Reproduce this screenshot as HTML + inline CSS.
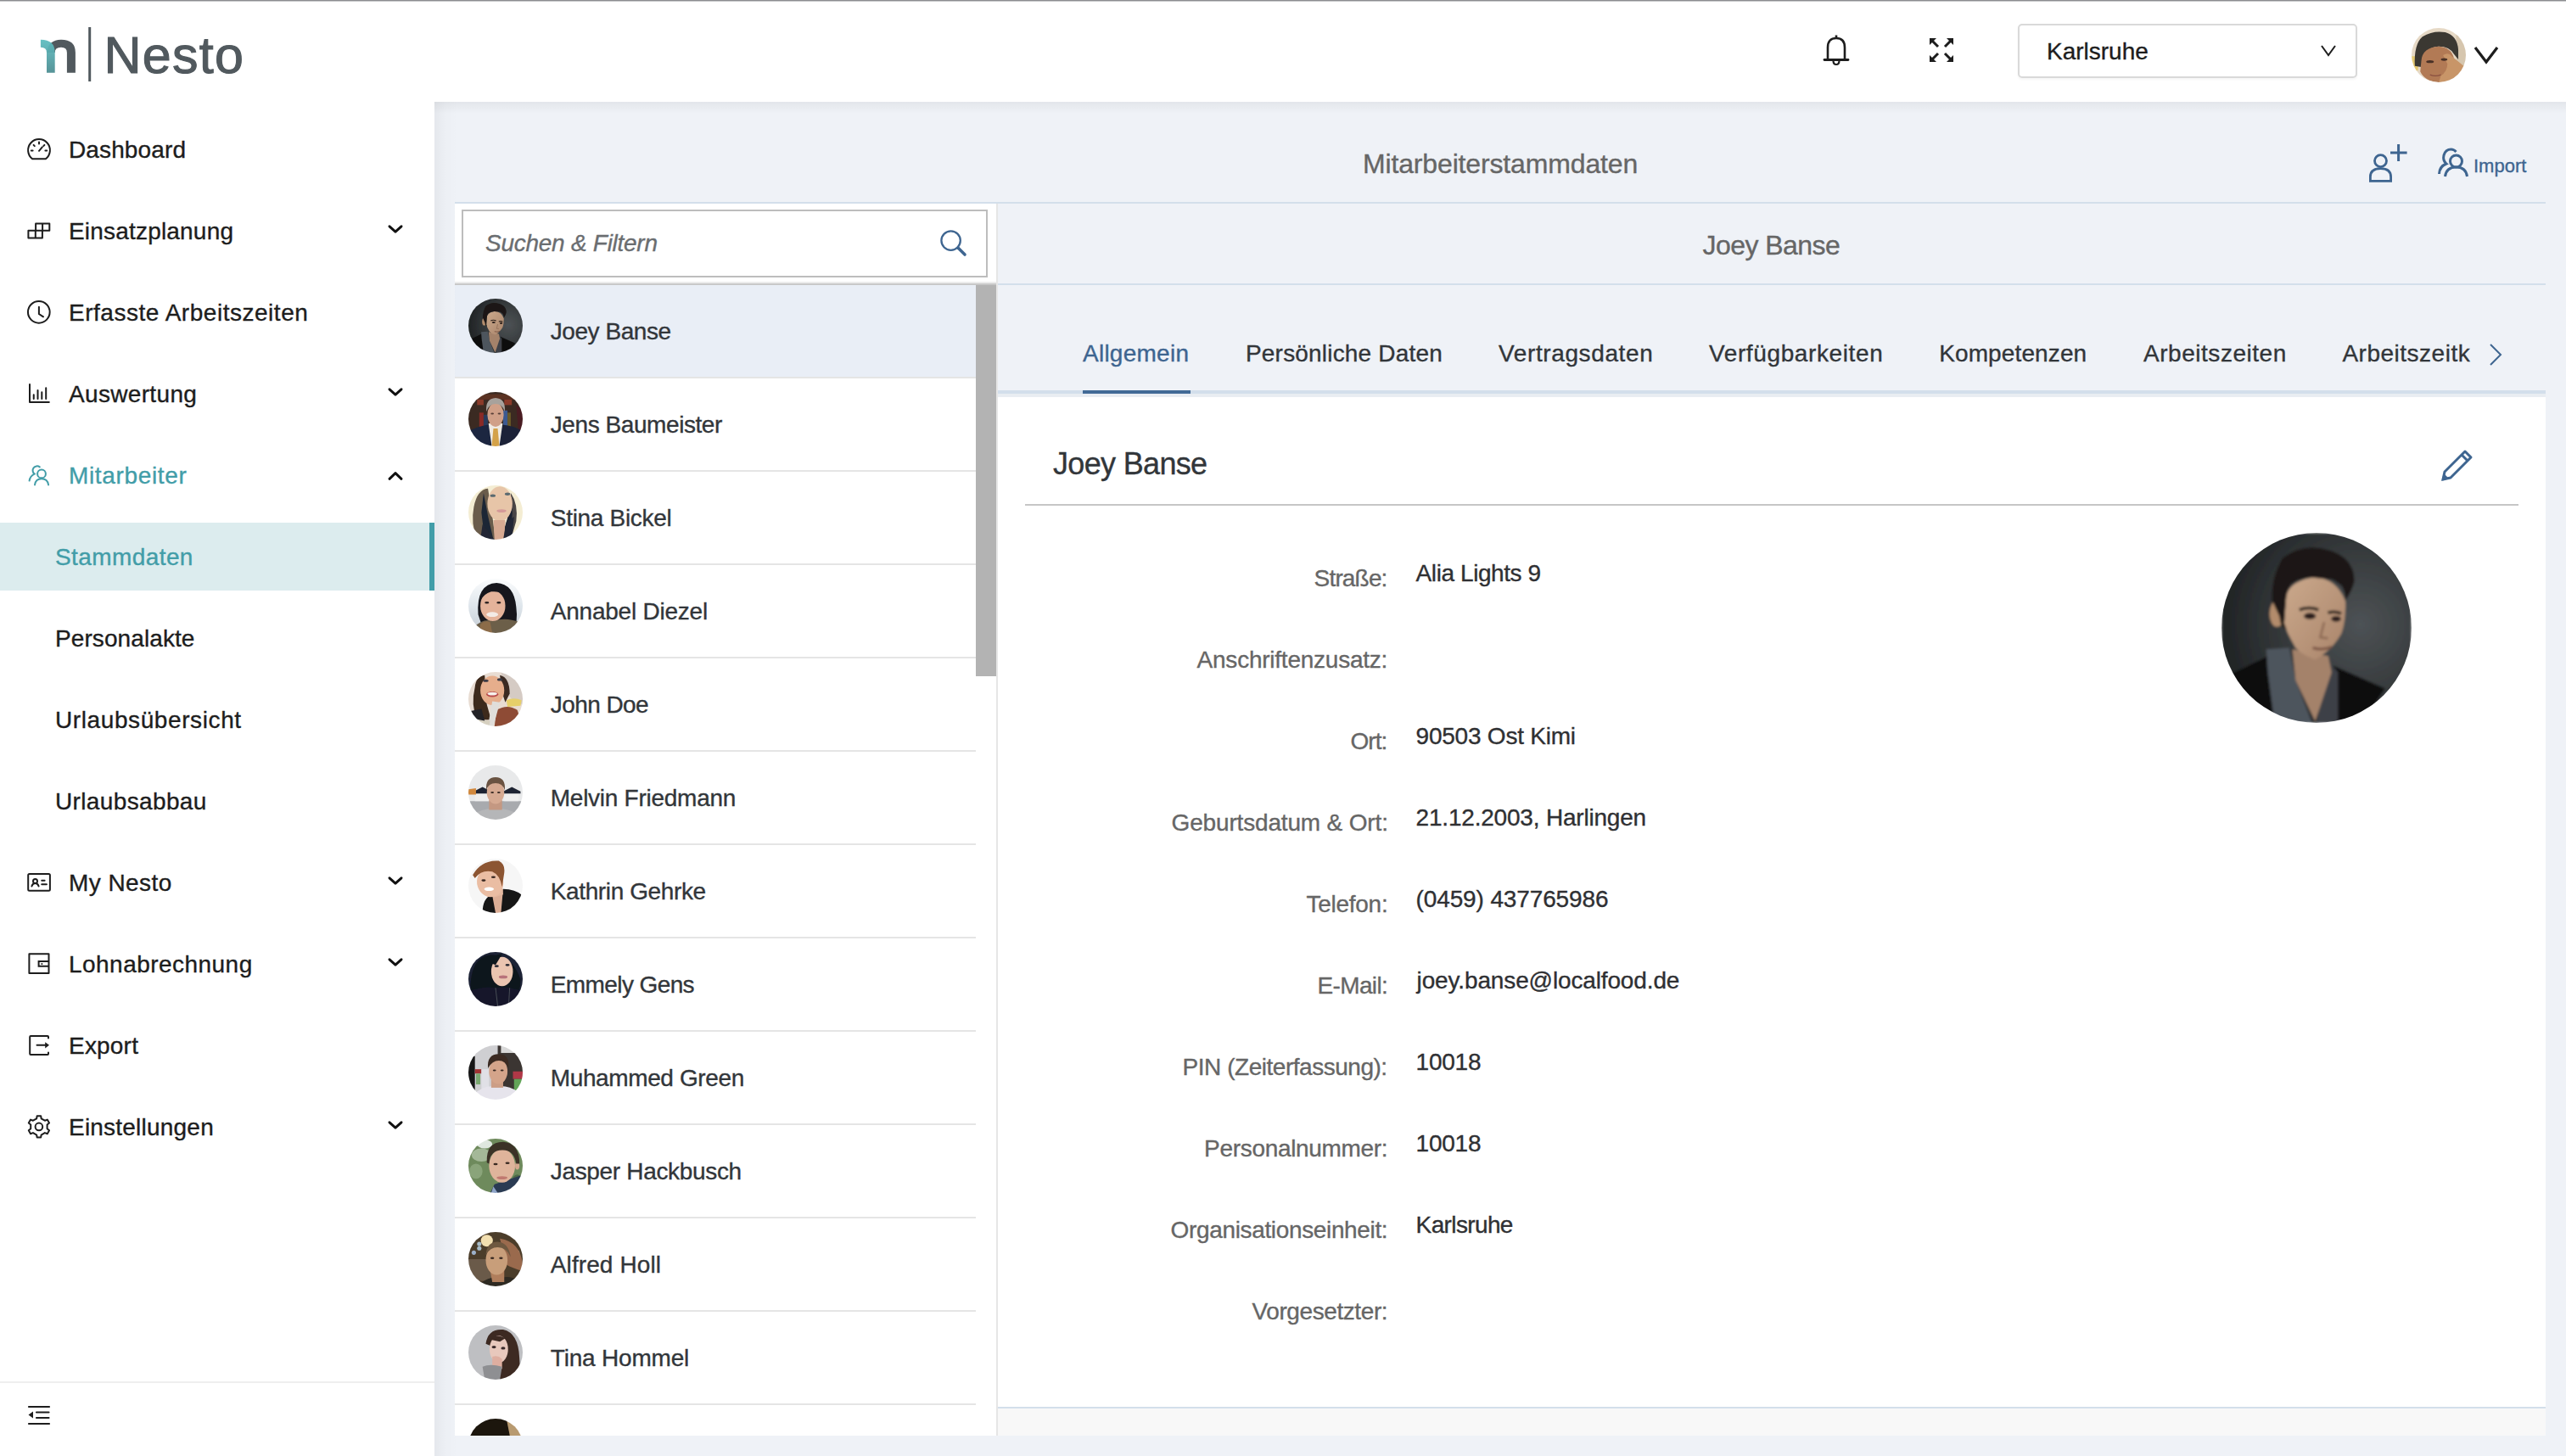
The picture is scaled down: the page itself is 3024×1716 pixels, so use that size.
<!DOCTYPE html><html><head><meta charset="utf-8"><style>
html,body{margin:0;padding:0;width:3024px;height:1716px;overflow:hidden;background:#eff2f7;}
body{position:relative;font-family:"Liberation Sans",sans-serif;}
.t{position:absolute;white-space:nowrap;line-height:1;-webkit-text-stroke-width:0.35px;}
.r{position:absolute;}
.s{position:absolute;overflow:visible;}
</style></head><body>
<div class="r" style="left:512px;top:120px;width:2512px;height:1596px;background:#eff2f7;"></div>
<div class="r" style="left:512px;top:0px;width:2512px;height:120px;background:#ffffff;"></div>
<div class="r" style="left:512px;top:120px;width:2512px;height:14px;background:transparent;background:linear-gradient(to bottom,rgba(0,0,0,0.05),rgba(0,0,0,0));"></div>
<div class="r" style="left:0px;top:0px;width:512px;height:1716px;background:#ffffff;z-index:2;"></div>
<div class="r" style="left:512px;top:120px;width:28px;height:1596px;background:transparent;background:linear-gradient(to right,rgba(0,0,0,0.045),rgba(0,0,0,0.012) 45%,rgba(0,0,0,0));z-index:1;"></div>
<div style="position:absolute;left:0;top:0;width:512px;height:1716px;z-index:3;">
<svg class="s" style="left:0px;top:0px;" width="300" height="110" viewBox="0 0 300 110"><defs><linearGradient id="lg" x1="0" y1="0" x2="0" y2="1"><stop offset="0" stop-color="#5ebdc0"/><stop offset="0.45" stop-color="#58a9ad"/><stop offset="1" stop-color="#4d8d92"/></linearGradient></defs><path d="M55 62 Q57 46.8 72 46.8 Q88.9 46.8 88.9 62 L88.9 85.8 L78.9 85.8 L78.9 62 Q78.9 55.8 72 55.8 Q64.7 55.8 64.7 62 Z" fill="#51595e"/><path d="M47.9 46.8 Q64.7 46.8 64.7 62 L64.7 85.8 L55 85.8 L55 62 Q55 55.8 47.9 55.8 Z" fill="url(#lg)" fill-opacity="0.95"/><rect x="104.2" y="32" width="3" height="64" fill="#51595e"/></svg>
<div class="t" style="left:122.40px;top:34.75px;font-size:61px;color:#51595e;letter-spacing:1.325px;-webkit-text-stroke:1.1px #51595e;">Nesto</div>
<div class="r" style="left:0px;top:616px;width:512px;height:80px;background:#dcecee;"></div>
<div class="r" style="left:506px;top:616px;width:6px;height:80px;background:#429da8;"></div>
<div class="t" style="left:81.00px;top:162.89px;font-size:28px;color:#1d1d1d;letter-spacing:0.125px;">Dashboard</div>
<svg class="s" style="left:30px;top:160px;" width="32" height="32" viewBox="0 0 32 32"><path d="M8.1 27.2 A12.9 12.9 0 1 1 23.9 27.2 Z" fill="none" stroke="#1d1d1d" stroke-width="2" stroke-linejoin="round"/><path d="M16 17.8 L19.8 13.4" fill="none" stroke="#1d1d1d" stroke-width="2" stroke-width="2.4" stroke-linecap="round"/><path d="M16 7.4 V9.6 M9.6 10.9 L10.8 12.1 M22.4 10.9 L21.2 12.1 M6.8 17.5 H8.6 M23.4 17.5 H25.2" fill="none" stroke="#1d1d1d" stroke-width="2" stroke-width="1.8" stroke-linecap="round"/></svg>
<div class="t" style="left:81.00px;top:258.89px;font-size:28px;color:#1d1d1d;letter-spacing:0.192px;">Einsatzplanung</div>
<svg class="s" style="left:30px;top:256px;" width="32" height="32" viewBox="0 0 32 32"><path d="M3.4 15.7 H19.9 V24.4 H3.4 Z M11.8 15.7 V24.4 M12.1 15.7 V7.4 H28.3 V15.7 H19.9 M20.1 7.4 V15.7" fill="none" stroke="#1d1d1d" stroke-width="2" stroke-linejoin="round"/></svg>
<svg class="s" style="left:455px;top:264px;" width="22" height="16" viewBox="0 0 22 16"><path d="M4 2.8 L11 9.1 L18 2.8" fill="none" stroke="#111" stroke-width="3" stroke-linecap="round" stroke-linejoin="round"/></svg>
<div class="t" style="left:81.00px;top:354.89px;font-size:28px;color:#1d1d1d;letter-spacing:0.524px;">Erfasste Arbeitszeiten</div>
<svg class="s" style="left:30px;top:352px;" width="32" height="32" viewBox="0 0 32 32"><circle cx="15.8" cy="15.8" r="12.85" fill="none" stroke="#1d1d1d" stroke-width="2"/><path d="M15.9 9.8 V18 L21 21.3" fill="none" stroke="#1d1d1d" stroke-width="2" stroke-linecap="round"/></svg>
<div class="t" style="left:81.00px;top:450.89px;font-size:28px;color:#1d1d1d;letter-spacing:0.333px;">Auswertung</div>
<svg class="s" style="left:30px;top:448px;" width="32" height="32" viewBox="0 0 32 32"><path d="M5 5 V26 H27.8" fill="none" stroke="#1d1d1d" stroke-width="2" stroke-linecap="round" stroke-linejoin="round"/><path d="M9.75 17.2 V21.9 M14.5 12 V21.9 M19.3 14.2 V21.9 M24.2 9.2 V21.9" fill="none" stroke="#1d1d1d" stroke-width="2" stroke-width="2.1" stroke-linecap="round"/></svg>
<svg class="s" style="left:455px;top:456px;" width="22" height="16" viewBox="0 0 22 16"><path d="M4 2.8 L11 9.1 L18 2.8" fill="none" stroke="#111" stroke-width="3" stroke-linecap="round" stroke-linejoin="round"/></svg>
<div class="t" style="left:81.00px;top:546.89px;font-size:28px;color:#429da8;letter-spacing:0.660px;">Mitarbeiter</div>
<svg class="s" style="left:30px;top:544px;" width="32" height="32" viewBox="0 0 32 32"><path d="M16.8 6.4 A5 5 0 1 0 10.6 14.6 Q5.5 16.8 4.6 22.6" fill="none" stroke="#429da8" stroke-width="2" stroke-linecap="round"/><circle cx="19" cy="14.4" r="4.9" fill="none" stroke="#429da8" stroke-width="2"/><path d="M11 27.4 Q12 20.2 19 20.2 Q26 20.2 27.1 27.4" fill="none" stroke="#429da8" stroke-width="2" stroke-linecap="round"/></svg>
<svg class="s" style="left:455px;top:552px;" width="22" height="16" viewBox="0 0 22 16"><path d="M4 12.3 L11 5.7 L18 12.3" fill="none" stroke="#111" stroke-width="3" stroke-linecap="round" stroke-linejoin="round"/></svg>
<div class="t" style="left:65.00px;top:642.89px;font-size:28px;color:#429da8;letter-spacing:0.411px;">Stammdaten</div>
<div class="t" style="left:65.00px;top:738.89px;font-size:28px;color:#1d1d1d;letter-spacing:0.091px;">Personalakte</div>
<div class="t" style="left:65.00px;top:834.89px;font-size:28px;color:#1d1d1d;letter-spacing:0.600px;">Urlaubsübersicht</div>
<div class="t" style="left:65.00px;top:930.89px;font-size:28px;color:#1d1d1d;letter-spacing:0.364px;">Urlaubsabbau</div>
<div class="t" style="left:81.00px;top:1026.89px;font-size:28px;color:#1d1d1d;letter-spacing:0.429px;">My Nesto</div>
<svg class="s" style="left:30px;top:1024px;" width="32" height="32" viewBox="0 0 32 32"><rect x="3.2" y="6" width="25.7" height="19.7" rx="1.5" fill="none" stroke="#1d1d1d" stroke-width="2"/><circle cx="11.5" cy="14.4" r="2.5" fill="none" stroke="#1d1d1d" stroke-width="2" stroke-width="1.7"/><path d="M7.4 20.5 Q8.5 17.1 11.5 17.1 Q14.5 17.1 15.6 20.5 M19.2 13.7 H22.6 M19.2 18.3 H24.9" fill="none" stroke="#1d1d1d" stroke-width="2" stroke-width="1.8" stroke-linecap="round"/></svg>
<svg class="s" style="left:455px;top:1032px;" width="22" height="16" viewBox="0 0 22 16"><path d="M4 2.8 L11 9.1 L18 2.8" fill="none" stroke="#111" stroke-width="3" stroke-linecap="round" stroke-linejoin="round"/></svg>
<div class="t" style="left:81.00px;top:1122.89px;font-size:28px;color:#1d1d1d;letter-spacing:0.462px;">Lohnabrechnung</div>
<svg class="s" style="left:30px;top:1120px;" width="32" height="32" viewBox="0 0 32 32"><path d="M4.4 4.2 H27.5 V27.1 H4.4 Z" fill="none" stroke="#1d1d1d" stroke-width="2" stroke-linejoin="round"/><path d="M27.5 13 H15.6 V18.7 H27.5" fill="none" stroke="#1d1d1d" stroke-width="2" stroke-width="1.8"/><circle cx="19.4" cy="16" r="1" fill="#1d1d1d"/></svg>
<svg class="s" style="left:455px;top:1128px;" width="22" height="16" viewBox="0 0 22 16"><path d="M4 2.8 L11 9.1 L18 2.8" fill="none" stroke="#111" stroke-width="3" stroke-linecap="round" stroke-linejoin="round"/></svg>
<div class="t" style="left:81.00px;top:1218.89px;font-size:28px;color:#1d1d1d;letter-spacing:0.200px;">Export</div>
<svg class="s" style="left:30px;top:1216px;" width="32" height="32" viewBox="0 0 32 32"><path d="M27 7.5 V6 Q27 5 26 5 H6.2 Q5.2 5 5.2 6 V26 Q5.2 27 6.2 27 H26 Q27 27 27 26 V24.5" fill="none" stroke="#1d1d1d" stroke-width="2" stroke-linecap="round"/><path d="M13.5 15.7 H24" fill="none" stroke="#1d1d1d" stroke-width="2" stroke-linecap="round"/><path d="M23.2 12.2 L28 15.7 L23.2 19.6 Z" fill="#1d1d1d"/></svg>
<div class="t" style="left:81.00px;top:1314.89px;font-size:28px;color:#1d1d1d;letter-spacing:0.217px;">Einstellungen</div>
<svg class="s" style="left:30px;top:1312px;" width="32" height="32" viewBox="0 0 32 32"><path d="M13.14 6.29 L13.66 3.20 L18.14 3.20 L18.66 6.29 L22.85 8.71 L25.78 7.61 L28.02 11.49 L25.60 13.48 L25.60 18.32 L28.02 20.31 L25.78 24.19 L22.85 23.09 L18.66 25.51 L18.14 28.60 L13.66 28.60 L13.14 25.51 L8.95 23.09 L6.02 24.19 L3.78 20.31 L6.20 18.32 L6.20 13.48 L3.78 11.49 L6.02 7.61 L8.95 8.71 Z" fill="none" stroke="#1d1d1d" stroke-width="2" stroke-linejoin="round"/><circle cx="15.9" cy="15.9" r="4.3" fill="none" stroke="#1d1d1d" stroke-width="2"/></svg>
<svg class="s" style="left:455px;top:1320px;" width="22" height="16" viewBox="0 0 22 16"><path d="M4 2.8 L11 9.1 L18 2.8" fill="none" stroke="#111" stroke-width="3" stroke-linecap="round" stroke-linejoin="round"/></svg>
<div class="r" style="left:0px;top:1628px;width:512px;height:2px;background:#efefef;"></div>
<svg class="s" style="left:33px;top:1655px;" width="28" height="26" viewBox="0 0 28 26"><path d="M1 3 H25 M10 9.5 H24.5 M10 16 H24.5 M1 23 H25" stroke="#1d1d1d" stroke-width="2.2" stroke-linecap="round"/><path d="M0.5 12.5 L6 8.5 L6 16.5 Z" fill="#1d1d1d"/></svg>
</div>
<div class="r" style="left:0px;top:0px;width:3024px;height:1px;background:#8c8d90;z-index:10;"></div>
<div class="r" style="left:0px;top:1px;width:3024px;height:1px;background:#c8c9cb;z-index:10;"></div>
<svg class="s" style="left:2148px;top:40px;" width="32" height="40" viewBox="0 0 32 40"><path d="M6 30 V16 Q6 5 16 5 Q26 5 26 16 V30" fill="none" stroke="#1d1d1d" stroke-width="2.6"/><path d="M2 30.5 H30" stroke="#1d1d1d" stroke-width="2.8" stroke-linecap="round"/><path d="M16 1.5 V5" stroke="#1d1d1d" stroke-width="2.6"/><path d="M12.5 31.5 Q12.5 36 16 36 Q19.5 36 19.5 31.5" fill="none" stroke="#1d1d1d" stroke-width="2.2"/></svg>
<svg class="s" style="left:2272px;top:43px;" width="32" height="32" viewBox="0 0 32 32"><g stroke="#1d1d1d" stroke-width="3"><path d="M3 3 L12 12 M29 3 L20 12 M3 29 L12 20 M29 29 L20 20"/></g><g fill="#1d1d1d"><path d="M2 2 H10 L2 10 Z M30 2 H22 L30 10 Z M2 30 H10 L2 22 Z M30 30 H22 L30 22 Z"/></g></svg>
<div class="r" style="left:2378px;top:28px;width:400px;height:64px;background:#ffffff;box-sizing:border-box;border:2px solid #d9d9d9;border-radius:5px;box-shadow:0 2px 3px rgba(0,0,0,0.04);"></div>
<div class="t" style="left:2412.00px;top:46.89px;font-size:28px;color:#1d1d1d;">Karlsruhe</div>
<svg class="s" style="left:2733px;top:51px;" width="22" height="17" viewBox="0 0 22 17"><path d="M3 3 L11 14 L19 3" fill="none" stroke="#1d1d1d" stroke-width="2"/></svg>
<svg class="s" style="left:2842.0px;top:33.0px;" width="64" height="64" viewBox="0 0 100 100"><defs><clipPath id="chdr"><circle cx="50" cy="50" r="50"/></clipPath><filter id="fhdr" x="-5%" y="-5%" width="110%" height="110%"><feGaussianBlur stdDeviation="1.0"/></filter></defs><g clip-path="url(#chdr)"><g filter="url(#fhdr)"><rect width="100" height="100" fill="#e6d9c6"/>
<rect x="82" y="0" width="18" height="100" fill="#d6c6ae"/>
<rect x="0" y="52" width="12" height="26" fill="#e4c870"/>
<path d="M6 70 Q4 30 20 16 Q40 4 62 8 Q84 14 86 40 L86 58 L78 48 Q70 34 50 34 Q24 34 18 72 Z" fill="#3b3733"/>
<path d="M18 60 Q20 36 50 34 Q74 36 78 56 L80 76 Q74 96 50 100 Q24 98 16 80 Z" fill="#b27a55"/>
<path d="M58 50 Q68 44 74 52 L96 70 L90 96 L50 100 L54 88 Q66 80 66 66 Z" fill="#c89568"/>
<ellipse cx="34" cy="62" rx="7" ry="2.6" fill="#4a3028"/><ellipse cx="60" cy="58" rx="6" ry="2.6" fill="#4a3028"/>
<path d="M34 86 Q44 90 54 86" stroke="#8a5040" stroke-width="2" fill="none"/></g></g></svg>
<svg class="s" style="left:2914px;top:52px;" width="34" height="25" viewBox="0 0 34 25"><path d="M3 4 L16 21 L29 4" fill="none" stroke="#1d1d1d" stroke-width="3.2"/></svg>
<div class="t" style="left:1606.00px;top:176.51px;font-size:32px;color:#666666;letter-spacing:-0.150px;">Mitarbeiterstammdaten</div>
<svg class="s" style="left:2790px;top:168px;" width="50" height="50" viewBox="0 0 50 50"><circle cx="15.5" cy="21.6" r="7" fill="none" stroke="#3e6590" stroke-width="2.8"/><path d="M3.4 45.4 V40.5 Q3.4 30.6 15.5 30.6 Q27.6 30.6 27.6 40.5 V45.4 Z" fill="none" stroke="#3e6590" stroke-width="2.8"/><path d="M36.6 2 V22 M27 12 H46.6" stroke="#3e6590" stroke-width="3"/></svg>
<svg class="s" style="left:2872px;top:172px;" width="40" height="40" viewBox="0 0 40 40"><path d="M2.5 33 Q3 24 11 21 Q6.5 17 8 11 Q10 4 16.5 4 Q20 4 22.5 7" fill="none" stroke="#3e6590" stroke-width="3"/><circle cx="22.5" cy="18" r="7" fill="none" stroke="#3e6590" stroke-width="3"/><path d="M9.5 36 Q11 25 22.5 25 Q34 25 35.5 36" fill="none" stroke="#3e6590" stroke-width="3"/></svg>
<div class="t" style="left:2915.00px;top:184.97px;font-size:22px;color:#3e6590;">Import</div>
<div class="r" style="left:536px;top:238px;width:2464px;height:2px;background:#d3dfeb;"></div>
<div class="r" style="left:536px;top:240px;width:638px;height:1452px;background:#ffffff;"></div>
<div class="r" style="left:1174px;top:240px;width:2px;height:1452px;background:#e6e6e6;"></div>
<div class="r" style="left:544px;top:247px;width:620px;height:80px;background:#ffffff;box-sizing:border-box;border:2px solid #bdbdbd;"></div>
<div class="t" style="left:572.00px;top:272.89px;font-size:28px;color:#6a6d70;letter-spacing:-0.267px;font-style:italic;">Suchen &amp; Filtern</div>
<svg class="s" style="left:1104px;top:268px;" width="40" height="40" viewBox="0 0 40 40"><circle cx="16.6" cy="15.6" r="11.2" fill="none" stroke="#3e6590" stroke-width="2.3"/><path d="M25 24 L33 32" stroke="#3e6590" stroke-width="3.6" stroke-linecap="round"/></svg>
<div class="r" style="left:536px;top:332px;width:638px;height:2px;background:#ececec;"></div>
<div class="r" style="left:536px;top:334px;width:638px;height:2px;background:#c8c8c8;"></div>
<div style="position:absolute;left:536px;top:336px;width:638px;height:1356px;overflow:hidden;">
<div class="r" style="left:0px;top:0px;width:638px;height:108px;background:#e9eef6;"></div>
<div class="r" style="left:0px;top:108px;width:614px;height:2px;background:#e5e5e5;"></div>
<svg class="s" style="left:16.0px;top:16.0px;" width="64" height="64" viewBox="0 0 100 100"><defs><clipPath id="cp0"><circle cx="50" cy="50" r="50"/></clipPath><filter id="fp0" x="-5%" y="-5%" width="110%" height="110%"><feGaussianBlur stdDeviation="1.0"/></filter></defs><g clip-path="url(#cp0)"><g filter="url(#fp0)"><defs><radialGradient id="JB" cx="0.73" cy="0.48" r="0.7"><stop offset="0" stop-color="#4d5255"/><stop offset="0.55" stop-color="#363a3c"/><stop offset="1" stop-color="#222527"/></radialGradient>
<linearGradient id="JF" x1="0" y1="0" x2="1" y2="1"><stop offset="0" stop-color="#cba98c"/><stop offset="1" stop-color="#a9846a"/></linearGradient></defs>
<rect width="100" height="100" fill="url(#JB)"/>
<path d="M6.4 73.4 L24.4 64.8 L28.8 100 H0 V81.9 Z" fill="#101010"/>
<path d="M58.8 69.9 L86.2 81.9 L77.6 94.8 L70 100 H61.3 Z" fill="#111111"/>
<path d="M23.6 61.3 L35.6 60.5 L39 77.6 L47.6 100 H27.9 L24.4 73.4 Z" fill="#4e555d"/>
<path d="M55.3 66.3 L61.3 73.4 L61.3 100 H50.2 Z" fill="#3c4147"/>
<path d="M37.3 61.3 L56.2 64.8 L57.9 73.4 L49.3 99.1 L39 77.6 Z" fill="#a4826a"/>
<ellipse cx="29.2" cy="42.5" rx="3.9" ry="6.9" fill="#b38c6c"/>
<path d="M33.9 35.6 Q34 26 47.6 23.6 Q60 23 65.2 36 L65.2 39.1 Q65 48 63.1 52.9 Q58 62 49.3 66.6 Q42 64 39 60.5 Q34 52 33 47.6 Z" fill="url(#JF)"/>
<path d="M26.6 35.6 Q26 24 32.1 13.3 Q39 8 47.6 7.7 Q58 8 64.8 13.3 Q70 18 69.9 25.3 Q69 30 65.2 35.6 Q65 30 63.1 27.9 Q60 25 57.9 24.4 L47.6 23.6 Q42 24 39 25.3 Q36 27 35.6 28.7 Q34 32 33.9 35.6 L33 47.6 L34.3 51 Q31 50 30.5 44 Z" fill="#1b1714"/>
<path d="M41 40.5 Q46 38.5 51 40.5 M56 42 Q60 41 63 42.5" stroke="#2a201a" stroke-width="1.6" fill="none"/>
<ellipse cx="46.5" cy="43.8" rx="3.2" ry="1.7" fill="#2a1f1a"/><ellipse cx="60.3" cy="45.3" rx="2.6" ry="1.5" fill="#2a1f1a"/>
<path d="M54 47 L52 55 L56 55.5" stroke="#8e6b55" stroke-width="1.2" fill="none"/>
<path d="M48 60.5 Q53 62 58 60" stroke="#7a5444" stroke-width="1.4" fill="none"/></g></g></svg>
<div class="t" style="left:112.80px;top:40.89px;font-size:28px;color:#32363a;letter-spacing:-0.444px;">Joey Banse</div>
<div class="r" style="left:0px;top:218px;width:614px;height:2px;background:#e5e5e5;"></div>
<svg class="s" style="left:16.0px;top:126.0px;" width="64" height="64" viewBox="0 0 100 100"><defs><clipPath id="cp1"><circle cx="50" cy="50" r="50"/></clipPath><filter id="fp1" x="-5%" y="-5%" width="110%" height="110%"><feGaussianBlur stdDeviation="1.0"/></filter></defs><g clip-path="url(#cp1)"><g filter="url(#fp1)"><rect width="100" height="100" fill="#3a2c24"/>
<rect x="14" y="4" width="70" height="10" fill="#5a3024"/><rect x="16" y="14" width="12" height="10" fill="#8a3a2a"/><rect x="66" y="14" width="14" height="10" fill="#8a3a2a"/>
<rect x="20" y="38" width="8" height="28" fill="#8a2c26"/><rect x="28" y="42" width="8" height="24" fill="#2c3a5a"/><rect x="64" y="34" width="8" height="32" fill="#3c5a90"/><rect x="72" y="38" width="6" height="28" fill="#6a5a2a"/>
<path d="M88 24 L100 34 V80 L92 72 Z" fill="#4a1a24"/>
<path d="M0 72 Q20 62 38 60 L50 100 H0 Z" fill="#1c2540"/>
<path d="M62 60 Q84 62 100 72 V100 H50 Z" fill="#1a2238"/>
<path d="M37 58 L63 58 L57 100 H43 Z" fill="#eeeae2"/>
<path d="M46 67 L54 67 L57 100 H43 Z" fill="#d4a24a"/>
<ellipse cx="50" cy="42" rx="15" ry="22" fill="#d0a088"/>
<path d="M33 36 Q31 12 50 11 Q69 12 67 36 Q62 22 50 22 Q38 22 33 36 Z" fill="#a8a29c"/>
<ellipse cx="44" cy="40" rx="3" ry="1.6" fill="#5a4038"/><ellipse cx="57" cy="40" rx="3" ry="1.6" fill="#5a4038"/></g></g></svg>
<div class="t" style="left:112.80px;top:150.89px;font-size:28px;color:#32363a;letter-spacing:-0.429px;">Jens Baumeister</div>
<div class="r" style="left:0px;top:328px;width:614px;height:2px;background:#e5e5e5;"></div>
<svg class="s" style="left:16.0px;top:236.0px;" width="64" height="64" viewBox="0 0 100 100"><defs><clipPath id="cp2"><circle cx="50" cy="50" r="50"/></clipPath><filter id="fp2" x="-5%" y="-5%" width="110%" height="110%"><feGaussianBlur stdDeviation="1.0"/></filter></defs><g clip-path="url(#cp2)"><g filter="url(#fp2)"><rect width="100" height="100" fill="#f4edd3"/>
<path d="M10 40 Q16 8 36 6 L44 56 L50 100 H16 Q4 70 10 40 Z" fill="#6a5c4c"/>
<path d="M28 14 L36 56 L46 100 H30 L24 50 Z" fill="#1e2634"/>
<path d="M78 14 Q92 34 88 66 L78 100 H60 L74 60 Z" fill="#4a4444"/>
<path d="M76 24 Q86 50 76 80 L66 100 H60 L72 60 Z" fill="#1e2430"/>
<ellipse cx="58" cy="34" rx="23" ry="32" fill="#e7c5a8"/>
<path d="M46 64 L68 64 L66 100 H48 Z" fill="#d8aa92"/>
<path d="M26 72 L48 100 H22 Z" fill="#222834"/><path d="M70 68 L84 58 L80 100 H64 Z" fill="#222834"/>
<ellipse cx="45" cy="19" rx="5" ry="2.6" fill="#5a6a70"/><ellipse cx="72" cy="16" rx="5" ry="2.6" fill="#5a6a70"/>
<ellipse cx="61" cy="47" rx="9" ry="3" fill="#d49a98"/></g></g></svg>
<div class="t" style="left:112.80px;top:260.89px;font-size:28px;color:#32363a;letter-spacing:-0.309px;">Stina Bickel</div>
<div class="r" style="left:0px;top:438px;width:614px;height:2px;background:#e5e5e5;"></div>
<svg class="s" style="left:16.0px;top:346.0px;" width="64" height="64" viewBox="0 0 100 100"><defs><clipPath id="cp3"><circle cx="50" cy="50" r="50"/></clipPath><filter id="fp3" x="-5%" y="-5%" width="110%" height="110%"><feGaussianBlur stdDeviation="1.0"/></filter></defs><g clip-path="url(#cp3)"><g filter="url(#fp3)"><defs><linearGradient id="ANB" x1="0" y1="0" x2="0" y2="1"><stop offset="0" stop-color="#fbfcfd"/><stop offset="0.5" stop-color="#dfe6ec"/><stop offset="1" stop-color="#c4ccd4"/></linearGradient></defs>
<rect width="100" height="100" fill="url(#ANB)"/>
<path d="M18 66 Q14 10 52 8 Q84 10 88 52 Q92 82 82 96 L28 96 Z" fill="#15171d"/>
<path d="M10 90 Q26 72 46 78 Q68 70 94 80 V100 H6 Z" fill="#6c5e4a"/>
<path d="M22 84 Q30 76 40 80 L44 100 H20 Z" fill="#8c6c48"/>
<ellipse cx="45" cy="50" rx="23" ry="28" fill="#e4b39a"/>
<path d="M21 42 Q24 14 50 12 Q72 12 76 34 Q62 22 42 24 Q28 28 21 42 Z" fill="#15171d"/>
<ellipse cx="34" cy="44" rx="4" ry="2" fill="#2a2020"/><ellipse cx="56" cy="44" rx="4" ry="2" fill="#2a2020"/>
<ellipse cx="44" cy="66" rx="11" ry="4.5" fill="#f3ebe6"/></g></g></svg>
<div class="t" style="left:112.80px;top:370.89px;font-size:28px;color:#32363a;letter-spacing:-0.231px;">Annabel Diezel</div>
<div class="r" style="left:0px;top:548px;width:614px;height:2px;background:#e5e5e5;"></div>
<svg class="s" style="left:16.0px;top:456.0px;" width="64" height="64" viewBox="0 0 100 100"><defs><clipPath id="cp4"><circle cx="50" cy="50" r="50"/></clipPath><filter id="fp4" x="-5%" y="-5%" width="110%" height="110%"><feGaussianBlur stdDeviation="1.0"/></filter></defs><g clip-path="url(#cp4)"><g filter="url(#fp4)"><rect width="100" height="100" fill="#e8dcd2"/>
<path d="M60 0 L100 10 V60 L80 50 Q70 40 64 20 Z" fill="#d5cbc4"/>
<path d="M70 52 Q84 46 98 52 L96 62 L72 64 Z" fill="#e6cf6a"/>
<path d="M12 28 Q14 8 30 6 L34 60 L42 88 H16 Q4 60 12 28 Z" fill="#3c2a1e"/>
<path d="M58 6 Q76 10 76 40 L68 56 L62 38 Z" fill="#3a2a20"/>
<ellipse cx="44" cy="34" rx="22" ry="27" fill="#e6ae8c"/>
<ellipse cx="32" cy="16" rx="5" ry="2.5" fill="#3a3a44"/><ellipse cx="58" cy="14" rx="5" ry="2.5" fill="#3a3a44"/>
<ellipse cx="44" cy="41" rx="11" ry="5" fill="#b8484a"/><ellipse cx="44" cy="40" rx="9" ry="3" fill="#f6f2ec"/>
<path d="M52 70 Q72 58 90 70 L100 100 H48 Z" fill="#8e4c34"/>
<path d="M44 54 L58 56 L46 100 H36 Z" fill="#e0deda"/>
<path d="M8 86 L40 90 L38 100 H12 Z" fill="#d6d0c0"/>
<path d="M4 72 L24 68 L30 90 L10 86 Z" fill="#202028"/></g></g></svg>
<div class="t" style="left:112.80px;top:480.89px;font-size:28px;color:#32363a;letter-spacing:-0.571px;">John Doe</div>
<div class="r" style="left:0px;top:658px;width:614px;height:2px;background:#e5e5e5;"></div>
<svg class="s" style="left:16.0px;top:566.0px;" width="64" height="64" viewBox="0 0 100 100"><defs><clipPath id="cp5"><circle cx="50" cy="50" r="50"/></clipPath><filter id="fp5" x="-5%" y="-5%" width="110%" height="110%"><feGaussianBlur stdDeviation="1.0"/></filter></defs><g clip-path="url(#cp5)"><g filter="url(#fp5)"><rect width="100" height="100" fill="#e8e9ea"/>
<rect x="0" y="66" width="100" height="34" fill="#a8aaae"/>
<rect x="12" y="48" width="28" height="18" fill="#eeeeee"/><path d="M10 48 L26 40 L42 48 V52 H10 Z" fill="#1f2430"/>
<rect x="66" y="48" width="26" height="18" fill="#eeeeee"/><path d="M64 48 L80 40 L96 48 V52 H64 Z" fill="#1f2430"/>
<path d="M0 44 L14 42 V54 H0 Z" fill="#d0883e"/>
<path d="M10 90 Q28 78 50 80 Q72 78 90 90 V100 H10 Z" fill="#b5b6b8"/>
<rect x="38" y="64" width="24" height="18" fill="#c49882"/>
<ellipse cx="50" cy="50" rx="16" ry="21" fill="#d6aa92"/>
<path d="M33 46 Q31 22 50 22 Q69 22 67 46 Q63 33 50 33 Q37 33 33 46 Z" fill="#6a5342"/>
<ellipse cx="44" cy="50" rx="3" ry="1.6" fill="#3a2a24"/><ellipse cx="56" cy="50" rx="3" ry="1.6" fill="#3a2a24"/></g></g></svg>
<div class="t" style="left:112.80px;top:590.89px;font-size:28px;color:#32363a;letter-spacing:-0.267px;">Melvin Friedmann</div>
<div class="r" style="left:0px;top:768px;width:614px;height:2px;background:#e5e5e5;"></div>
<svg class="s" style="left:16.0px;top:676.0px;" width="64" height="64" viewBox="0 0 100 100"><defs><clipPath id="cp6"><circle cx="50" cy="50" r="50"/></clipPath><filter id="fp6" x="-5%" y="-5%" width="110%" height="110%"><feGaussianBlur stdDeviation="1.0"/></filter></defs><g clip-path="url(#cp6)"><g filter="url(#fp6)"><rect width="100" height="100" fill="#f6f6f6"/>
<path d="M26 100 Q26 72 44 66 L64 56 Q86 56 100 68 V100 Z" fill="#121316"/>
<path d="M44 68 L64 56 L60 100 H50 Z" fill="#dcae96"/>
<path d="M40 56 L62 50 L64 66 L46 72 Z" fill="#e4b8a0"/>
<ellipse cx="40" cy="44" rx="24" ry="27" fill="#eabda3" transform="rotate(-18 40 44)"/>
<path d="M8 30 Q24 2 56 4 Q68 10 66 26 L62 52 Q58 30 44 24 Q24 20 12 36 Z" fill="#8c5432"/>
<ellipse cx="28" cy="40" rx="4" ry="2" fill="#3a2a24"/><ellipse cx="46" cy="34" rx="4" ry="2" fill="#3a2a24"/>
<ellipse cx="38" cy="56" rx="9" ry="3.5" fill="#ffffff"/></g></g></svg>
<div class="t" style="left:112.80px;top:700.89px;font-size:28px;color:#32363a;letter-spacing:-0.385px;">Kathrin Gehrke</div>
<div class="r" style="left:0px;top:878px;width:614px;height:2px;background:#e5e5e5;"></div>
<svg class="s" style="left:16.0px;top:786.0px;" width="64" height="64" viewBox="0 0 100 100"><defs><clipPath id="cp7"><circle cx="50" cy="50" r="50"/></clipPath><filter id="fp7" x="-5%" y="-5%" width="110%" height="110%"><feGaussianBlur stdDeviation="1.0"/></filter></defs><g clip-path="url(#cp7)"><g filter="url(#fp7)"><rect width="100" height="100" fill="#1b2236"/>
<path d="M4 60 Q6 10 40 5 Q80 4 96 50 Q96 80 80 100 H20 Q4 80 4 60 Z" fill="#10131c"/>
<path d="M0 72 Q30 62 50 66 Q70 62 100 72 V100 H0 Z" fill="#131829"/>
<ellipse cx="62" cy="36" rx="20" ry="27" fill="#eac4b0"/>
<path d="M40 20 Q48 2 62 4 L50 24 Z" fill="#10131c"/>
<ellipse cx="52" cy="26" rx="4" ry="2" fill="#2a2a34"/><ellipse cx="72" cy="24" rx="4" ry="2" fill="#2a2a34"/>
<ellipse cx="64" cy="46" rx="8" ry="3" fill="#b8727a"/>
<path d="M50 66 L54 100 M76 66 L74 100" stroke="#6a6a70" stroke-width="1"/></g></g></svg>
<div class="t" style="left:112.80px;top:810.89px;font-size:28px;color:#32363a;letter-spacing:-0.600px;">Emmely Gens</div>
<div class="r" style="left:0px;top:988px;width:614px;height:2px;background:#e5e5e5;"></div>
<svg class="s" style="left:16.0px;top:896.0px;" width="64" height="64" viewBox="0 0 100 100"><defs><clipPath id="cp8"><circle cx="50" cy="50" r="50"/></clipPath><filter id="fp8" x="-5%" y="-5%" width="110%" height="110%"><feGaussianBlur stdDeviation="1.0"/></filter></defs><g clip-path="url(#cp8)"><g filter="url(#fp8)"><rect width="100" height="100" fill="#cfcfd2"/>
<rect x="54" y="0" width="46" height="100" fill="#3a3432"/>
<rect x="60" y="0" width="30" height="14" fill="#d8d8d8"/>
<rect x="82" y="48" width="18" height="14" fill="#b03846"/><rect x="84" y="62" width="16" height="24" fill="#62a458"/>
<rect x="0" y="20" width="12" height="70" fill="#151515"/><rect x="12" y="44" width="12" height="8" fill="#a03030"/><rect x="14" y="52" width="8" height="20" fill="#7aa870"/>
<rect x="24" y="44" width="14" height="36" fill="#e0e0e6"/>
<path d="M10 90 Q30 72 50 76 Q72 72 92 86 V100 H10 Z" fill="#e6e4ec"/>
<rect x="42" y="62" width="22" height="16" fill="#cc9e86"/>
<ellipse cx="55" cy="48" rx="17" ry="23" fill="#d4a48a"/>
<path d="M36 42 Q34 16 56 16 Q76 16 74 42 Q68 28 56 28 Q44 28 36 42 Z" fill="#3a2c22"/>
<ellipse cx="48" cy="46" rx="3" ry="1.6" fill="#3a2a24"/><ellipse cx="62" cy="46" rx="3" ry="1.6" fill="#3a2a24"/></g></g></svg>
<div class="t" style="left:112.80px;top:920.89px;font-size:28px;color:#32363a;letter-spacing:-0.385px;">Muhammed Green</div>
<div class="r" style="left:0px;top:1098px;width:614px;height:2px;background:#e5e5e5;"></div>
<svg class="s" style="left:16.0px;top:1006.0px;" width="64" height="64" viewBox="0 0 100 100"><defs><clipPath id="cp9"><circle cx="50" cy="50" r="50"/></clipPath><filter id="fp9" x="-5%" y="-5%" width="110%" height="110%"><feGaussianBlur stdDeviation="1.0"/></filter></defs><g clip-path="url(#cp9)"><g filter="url(#fp9)"><rect width="100" height="100" fill="#6e8a5c"/>
<ellipse cx="24" cy="30" rx="18" ry="12" fill="#a4b898"/><ellipse cx="14" cy="60" rx="12" ry="14" fill="#8aa47a"/><ellipse cx="30" cy="10" rx="14" ry="8" fill="#dfe7df"/><ellipse cx="90" cy="80" rx="10" ry="14" fill="#4e6a46"/>
<path d="M40 100 L48 84 L96 68 L100 100 Z" fill="#2c3a52"/>
<path d="M46 88 L54 100 H42 Z" fill="#8ea4c8"/>
<ellipse cx="90" cy="50" rx="4" ry="7" fill="#d4a88e"/>
<ellipse cx="62" cy="50" rx="24" ry="31" fill="#dfb49b"/>
<path d="M34 44 Q32 6 64 6 Q94 8 94 46 L88 46 Q84 20 62 21 Q40 21 38 46 Z" fill="#3a3028"/>
<ellipse cx="50" cy="47" rx="4" ry="2" fill="#3a2a24"/><ellipse cx="72" cy="45" rx="4" ry="2" fill="#3a2a24"/>
<ellipse cx="62" cy="72" rx="10" ry="3" fill="#c07a70"/></g></g></svg>
<div class="t" style="left:112.80px;top:1030.89px;font-size:28px;color:#32363a;letter-spacing:-0.333px;">Jasper Hackbusch</div>
<div class="r" style="left:0px;top:1208px;width:614px;height:2px;background:#e5e5e5;"></div>
<svg class="s" style="left:16.0px;top:1116.0px;" width="64" height="64" viewBox="0 0 100 100"><defs><clipPath id="cp10"><circle cx="50" cy="50" r="50"/></clipPath><filter id="fp10" x="-5%" y="-5%" width="110%" height="110%"><feGaussianBlur stdDeviation="1.0"/></filter></defs><g clip-path="url(#cp10)"><g filter="url(#fp10)"><rect width="100" height="100" fill="#4c3c2a"/>
<rect x="0" y="50" width="50" height="40" fill="#6a5a48"/>
<circle cx="34" cy="16" r="11" fill="#f2dfb0"/>
<circle cx="20" cy="22" r="4" fill="#a8bcc8"/><circle cx="20" cy="30" r="4" fill="#a8bcc8"/><circle cx="10" cy="38" r="4" fill="#9cb0c8"/><circle cx="90" cy="38" r="4" fill="#f0f0e0"/><circle cx="90" cy="46" r="4" fill="#f2f2e2"/>
<path d="M58 12 Q96 18 100 60 L100 72 Q80 66 70 60 Z" fill="#9a6a4e"/>
<path d="M20 96 Q40 80 60 84 Q80 80 92 90 V100 H20 Z" fill="#2e2a22"/>
<path d="M40 70 L66 70 L66 92 L44 92 Z" fill="#b07e5c"/>
<ellipse cx="52" cy="52" rx="20" ry="27" fill="#c89e7a"/>
<path d="M32 42 Q34 18 54 18 Q74 20 78 46 Q70 28 54 28 Q40 28 32 42 Z" fill="#6e5840"/>
<ellipse cx="44" cy="48" rx="3.5" ry="2" fill="#3a2a24"/><ellipse cx="60" cy="48" rx="3.5" ry="2" fill="#3a2a24"/></g></g></svg>
<div class="t" style="left:112.80px;top:1140.89px;font-size:28px;color:#32363a;letter-spacing:0.100px;">Alfred Holl</div>
<div class="r" style="left:0px;top:1318px;width:614px;height:2px;background:#e5e5e5;"></div>
<svg class="s" style="left:16.0px;top:1226.0px;" width="64" height="64" viewBox="0 0 100 100"><defs><clipPath id="cp11"><circle cx="50" cy="50" r="50"/></clipPath><filter id="fp11" x="-5%" y="-5%" width="110%" height="110%"><feGaussianBlur stdDeviation="1.0"/></filter></defs><g clip-path="url(#cp11)"><g filter="url(#fp11)"><rect width="100" height="100" fill="#bebfc2"/>
<path d="M32 34 Q36 6 64 8 Q92 14 94 60 L96 100 H54 L56 44 Z" fill="#3c2a24"/>
<ellipse cx="56" cy="44" rx="17" ry="25" fill="#e8c8bc"/>
<path d="M40 26 Q52 14 68 24 L58 30 Z" fill="#3c2a24"/>
<ellipse cx="47" cy="40" rx="4" ry="2.5" fill="#3a2a2a"/><ellipse cx="64" cy="42" rx="4" ry="2.5" fill="#3a2a2a"/>
<path d="M44 58 Q54 54 62 62 L62 80 L44 80 Z" fill="#deaea0"/>
<path d="M26 76 Q40 70 62 76 L58 100 H30 Z" fill="#8e8f92"/></g></g></svg>
<div class="t" style="left:112.80px;top:1250.89px;font-size:28px;color:#32363a;letter-spacing:-0.200px;">Tina Hommel</div>
<div class="r" style="left:0px;top:1428px;width:614px;height:2px;background:#e5e5e5;"></div>
<svg class="s" style="left:16.0px;top:1336.0px;" width="64" height="64" viewBox="0 0 100 100"><defs><clipPath id="cp12"><circle cx="50" cy="50" r="50"/></clipPath><filter id="fp12" x="-5%" y="-5%" width="110%" height="110%"><feGaussianBlur stdDeviation="1.0"/></filter></defs><g clip-path="url(#cp12)"><g filter="url(#fp12)"><rect width="100" height="100" fill="#1c1511"/>
<path d="M70 0 L100 10 V60 L80 50 Z" fill="#b89a70"/>
<rect x="0" y="44" width="100" height="10" fill="#6a3c24"/></g></g></svg>
<div class="t" style="left:112.80px;top:1360.89px;font-size:28px;color:#32363a;letter-spacing:0.636px;">Ralf Ziegler</div>
<div class="r" style="left:614px;top:0px;width:24px;height:461px;background:#b3b3b3;"></div>
</div>
<div class="r" style="left:1176px;top:334px;width:1824px;height:2px;background:#d3dfeb;"></div>
<div class="t" style="left:2006.60px;top:272.51px;font-size:32px;color:#666666;letter-spacing:-0.556px;">Joey Banse</div>
<div class="t" style="left:1276.00px;top:402.89px;font-size:28px;color:#3e6590;letter-spacing:0.250px;">Allgemein</div>
<div class="t" style="left:1468.00px;top:402.89px;font-size:28px;color:#32363a;letter-spacing:0.188px;">Persönliche Daten</div>
<div class="t" style="left:1766.00px;top:402.89px;font-size:28px;color:#32363a;letter-spacing:0.617px;">Vertragsdaten</div>
<div class="t" style="left:2014.00px;top:402.89px;font-size:28px;color:#32363a;letter-spacing:0.614px;">Verfügbarkeiten</div>
<div class="t" style="left:2285.20px;top:402.89px;font-size:28px;color:#32363a;letter-spacing:0.120px;">Kompetenzen</div>
<div class="t" style="left:2526.00px;top:402.89px;font-size:28px;color:#32363a;letter-spacing:0.533px;">Arbeitszeiten</div>
<div class="t" style="left:2760.40px;top:402.89px;font-size:28px;color:#32363a;letter-spacing:0.509px;">Arbeitszeitk</div>
<svg class="s" style="left:2930px;top:402px;" width="22" height="32" viewBox="0 0 22 32"><path d="M5 4 L17 16 L5 28" fill="none" stroke="#3e6590" stroke-width="2"/></svg>
<div class="r" style="left:1176px;top:460px;width:1824px;height:4px;background:#d3dfeb;"></div>
<div class="r" style="left:1276px;top:460px;width:127px;height:4px;background:#426a96;"></div>
<div class="r" style="left:1176px;top:464px;width:1824px;height:4px;background:#e9edf2;"></div>
<div class="r" style="left:1176px;top:468px;width:1824px;height:1190px;background:#ffffff;"></div>
<div class="r" style="left:1176px;top:1658px;width:1824px;height:2px;background:#d3dfeb;"></div>
<div class="r" style="left:1176px;top:1660px;width:1824px;height:32px;background:#f8f8f8;"></div>
<div class="t" style="left:1241.00px;top:529.12px;font-size:36px;color:#32363a;letter-spacing:-0.667px;">Joey Banse</div>
<div class="r" style="left:1208px;top:594px;width:1760px;height:2px;background:#c6c6c6;"></div>
<svg class="s" style="left:2872px;top:524px;" width="48" height="48" viewBox="0 0 48 48"><path d="M7 41 L9 32 L33 8 L40 15 L16 39 Z" fill="none" stroke="#3e6590" stroke-width="3" stroke-linejoin="round"/><path d="M29 12 L36 19" stroke="#3e6590" stroke-width="3"/><path d="M5 43 L8 34 L14 40 Z" fill="#3e6590"/></svg>
<div class="t" style="left:1548.60px;top:667.89px;font-size:28px;color:#666666;letter-spacing:-0.833px;">Straße:</div>
<div class="t" style="left:1668.60px;top:661.89px;font-size:28px;color:#2f3033;letter-spacing:-0.417px;">Alia Lights 9</div>
<div class="t" style="left:1410.60px;top:763.89px;font-size:28px;color:#666666;letter-spacing:-0.235px;">Anschriftenzusatz:</div>
<div class="t" style="left:1591.60px;top:859.89px;font-size:28px;color:#666666;letter-spacing:-1.000px;">Ort:</div>
<div class="t" style="left:1668.60px;top:853.89px;font-size:28px;color:#2f3033;letter-spacing:-0.231px;">90503 Ost Kimi</div>
<div class="t" style="left:1380.60px;top:955.89px;font-size:28px;color:#666666;letter-spacing:-0.167px;">Geburtsdatum &amp; Ort:</div>
<div class="t" style="left:1668.60px;top:949.89px;font-size:28px;color:#2f3033;letter-spacing:-0.200px;">21.12.2003, Harlingen</div>
<div class="t" style="left:1539.60px;top:1051.89px;font-size:28px;color:#666666;letter-spacing:-0.286px;">Telefon:</div>
<div class="t" style="left:1668.60px;top:1045.89px;font-size:28px;color:#2f3033;letter-spacing:-0.133px;">(0459) 437765986</div>
<div class="t" style="left:1552.60px;top:1147.89px;font-size:28px;color:#666666;letter-spacing:-0.667px;">E-Mail:</div>
<div class="t" style="left:1669.60px;top:1141.89px;font-size:28px;color:#2f3033;letter-spacing:-0.136px;">joey.banse@localfood.de</div>
<div class="t" style="left:1393.60px;top:1243.89px;font-size:28px;color:#666666;letter-spacing:-0.474px;">PIN (Zeiterfassung):</div>
<div class="t" style="left:1668.60px;top:1237.89px;font-size:28px;color:#2f3033;letter-spacing:-0.250px;">10018</div>
<div class="t" style="left:1419.10px;top:1339.89px;font-size:28px;color:#666666;letter-spacing:-0.321px;">Personalnummer:</div>
<div class="t" style="left:1668.60px;top:1333.89px;font-size:28px;color:#2f3033;letter-spacing:-0.250px;">10018</div>
<div class="t" style="left:1379.60px;top:1435.89px;font-size:28px;color:#666666;letter-spacing:-0.350px;">Organisationseinheit:</div>
<div class="t" style="left:1668.60px;top:1429.89px;font-size:28px;color:#2f3033;letter-spacing:-0.625px;">Karlsruhe</div>
<div class="t" style="left:1475.60px;top:1531.89px;font-size:28px;color:#666666;letter-spacing:-0.417px;">Vorgesetzter:</div>
<svg class="s" style="left:2618.0px;top:628.0px;" width="224" height="224" viewBox="0 0 100 100"><defs><clipPath id="cbig"><circle cx="50" cy="50" r="50"/></clipPath><filter id="fbig" x="-5%" y="-5%" width="110%" height="110%"><feGaussianBlur stdDeviation="0.6"/></filter></defs><g clip-path="url(#cbig)"><g filter="url(#fbig)"><defs><radialGradient id="JB" cx="0.73" cy="0.48" r="0.7"><stop offset="0" stop-color="#4d5255"/><stop offset="0.55" stop-color="#363a3c"/><stop offset="1" stop-color="#222527"/></radialGradient>
<linearGradient id="JF" x1="0" y1="0" x2="1" y2="1"><stop offset="0" stop-color="#cba98c"/><stop offset="1" stop-color="#a9846a"/></linearGradient></defs>
<rect width="100" height="100" fill="url(#JB)"/>
<path d="M6.4 73.4 L24.4 64.8 L28.8 100 H0 V81.9 Z" fill="#101010"/>
<path d="M58.8 69.9 L86.2 81.9 L77.6 94.8 L70 100 H61.3 Z" fill="#111111"/>
<path d="M23.6 61.3 L35.6 60.5 L39 77.6 L47.6 100 H27.9 L24.4 73.4 Z" fill="#4e555d"/>
<path d="M55.3 66.3 L61.3 73.4 L61.3 100 H50.2 Z" fill="#3c4147"/>
<path d="M37.3 61.3 L56.2 64.8 L57.9 73.4 L49.3 99.1 L39 77.6 Z" fill="#a4826a"/>
<ellipse cx="29.2" cy="42.5" rx="3.9" ry="6.9" fill="#b38c6c"/>
<path d="M33.9 35.6 Q34 26 47.6 23.6 Q60 23 65.2 36 L65.2 39.1 Q65 48 63.1 52.9 Q58 62 49.3 66.6 Q42 64 39 60.5 Q34 52 33 47.6 Z" fill="url(#JF)"/>
<path d="M26.6 35.6 Q26 24 32.1 13.3 Q39 8 47.6 7.7 Q58 8 64.8 13.3 Q70 18 69.9 25.3 Q69 30 65.2 35.6 Q65 30 63.1 27.9 Q60 25 57.9 24.4 L47.6 23.6 Q42 24 39 25.3 Q36 27 35.6 28.7 Q34 32 33.9 35.6 L33 47.6 L34.3 51 Q31 50 30.5 44 Z" fill="#1b1714"/>
<path d="M41 40.5 Q46 38.5 51 40.5 M56 42 Q60 41 63 42.5" stroke="#2a201a" stroke-width="1.6" fill="none"/>
<ellipse cx="46.5" cy="43.8" rx="3.2" ry="1.7" fill="#2a1f1a"/><ellipse cx="60.3" cy="45.3" rx="2.6" ry="1.5" fill="#2a1f1a"/>
<path d="M54 47 L52 55 L56 55.5" stroke="#8e6b55" stroke-width="1.2" fill="none"/>
<path d="M48 60.5 Q53 62 58 60" stroke="#7a5444" stroke-width="1.4" fill="none"/></g></g></svg>
</body></html>
